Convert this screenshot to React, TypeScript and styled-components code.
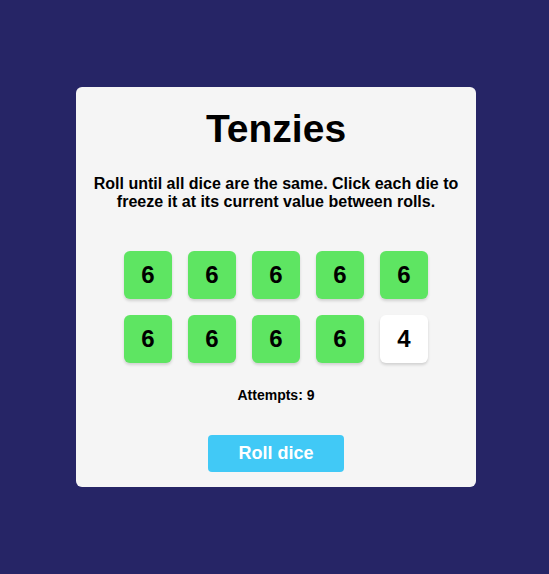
import React from "react";
import styled, { createGlobalStyle } from "styled-components";

const GlobalStyle = createGlobalStyle`
  html, body {
    margin: 0;
    padding: 0;
    background: #262566;
    font-family: "Liberation Sans", Arial, sans-serif;
  }
`;

const Page = styled.div`
  height: 574px;
  display: flex;
  align-items: center;
  justify-content: center;
  padding-left: 3px;
  box-sizing: border-box;
`;

const Card = styled.main`
  width: 400px;
  height: 400px;
  background: #f5f5f5;
  border-radius: 6px;
  display: flex;
  flex-direction: column;
  align-items: center;
  box-sizing: border-box;
  padding-top: 18px;
`;

const Title = styled.h1`
  margin: 0;
  font-size: 39px;
  font-weight: 700;
  color: #000;
  line-height: 48px;
`;

const Instructions = styled.p`
  margin: 22px 0 0;
  font-size: 16px;
  font-weight: 700;
  text-align: center;
  line-height: 18px;
  color: #000;
  padding: 0 16px;
`;

const DiceGrid = styled.div`
  margin-top: 40px;
  display: grid;
  grid-template-columns: repeat(5, 48px);
  gap: 16px;
`;

const Die = styled.button<{ $held: boolean }>`
  width: 48px;
  height: 48px;
  border: none;
  border-radius: 6px;
  background: ${(p) => (p.$held ? "#5ee562" : "#ffffff")};
  box-shadow: 0 2px 3px rgba(0, 0, 0, 0.15);
  font-family: "Liberation Sans", Arial, sans-serif;
  font-size: 24px;
  font-weight: 700;
  color: #000;
  display: flex;
  align-items: center;
  justify-content: center;
  padding: 0;
  cursor: pointer;
`;

const Attempts = styled.p`
  margin: 24px 0 0;
  font-size: 14px;
  font-weight: 700;
  color: #000;
`;

const RollButton = styled.button`
  margin-top: 32px;
  width: 136px;
  height: 37px;
  border: none;
  border-radius: 4px;
  background: #41c9f6;
  color: #fff;
  font-family: "Liberation Sans", Arial, sans-serif;
  font-size: 18px;
  font-weight: 700;
  cursor: pointer;
`;

const dice = [6, 6, 6, 6, 6, 6, 6, 6, 6, 4];

export default function App() {
  return (
    <>
      <GlobalStyle />
      <Page>
        <Card>
          <Title>Tenzies</Title>
          <Instructions>
            Roll until all dice are the same. Click each die to freeze it at its
            current value between rolls.
          </Instructions>
          <DiceGrid>
            {dice.map((v, i) => (
              <Die key={i} $held={v === 6}>
                {v}
              </Die>
            ))}
          </DiceGrid>
          <Attempts>Attempts: 9</Attempts>
          <RollButton>Roll dice</RollButton>
        </Card>
      </Page>
    </>
  );
}
